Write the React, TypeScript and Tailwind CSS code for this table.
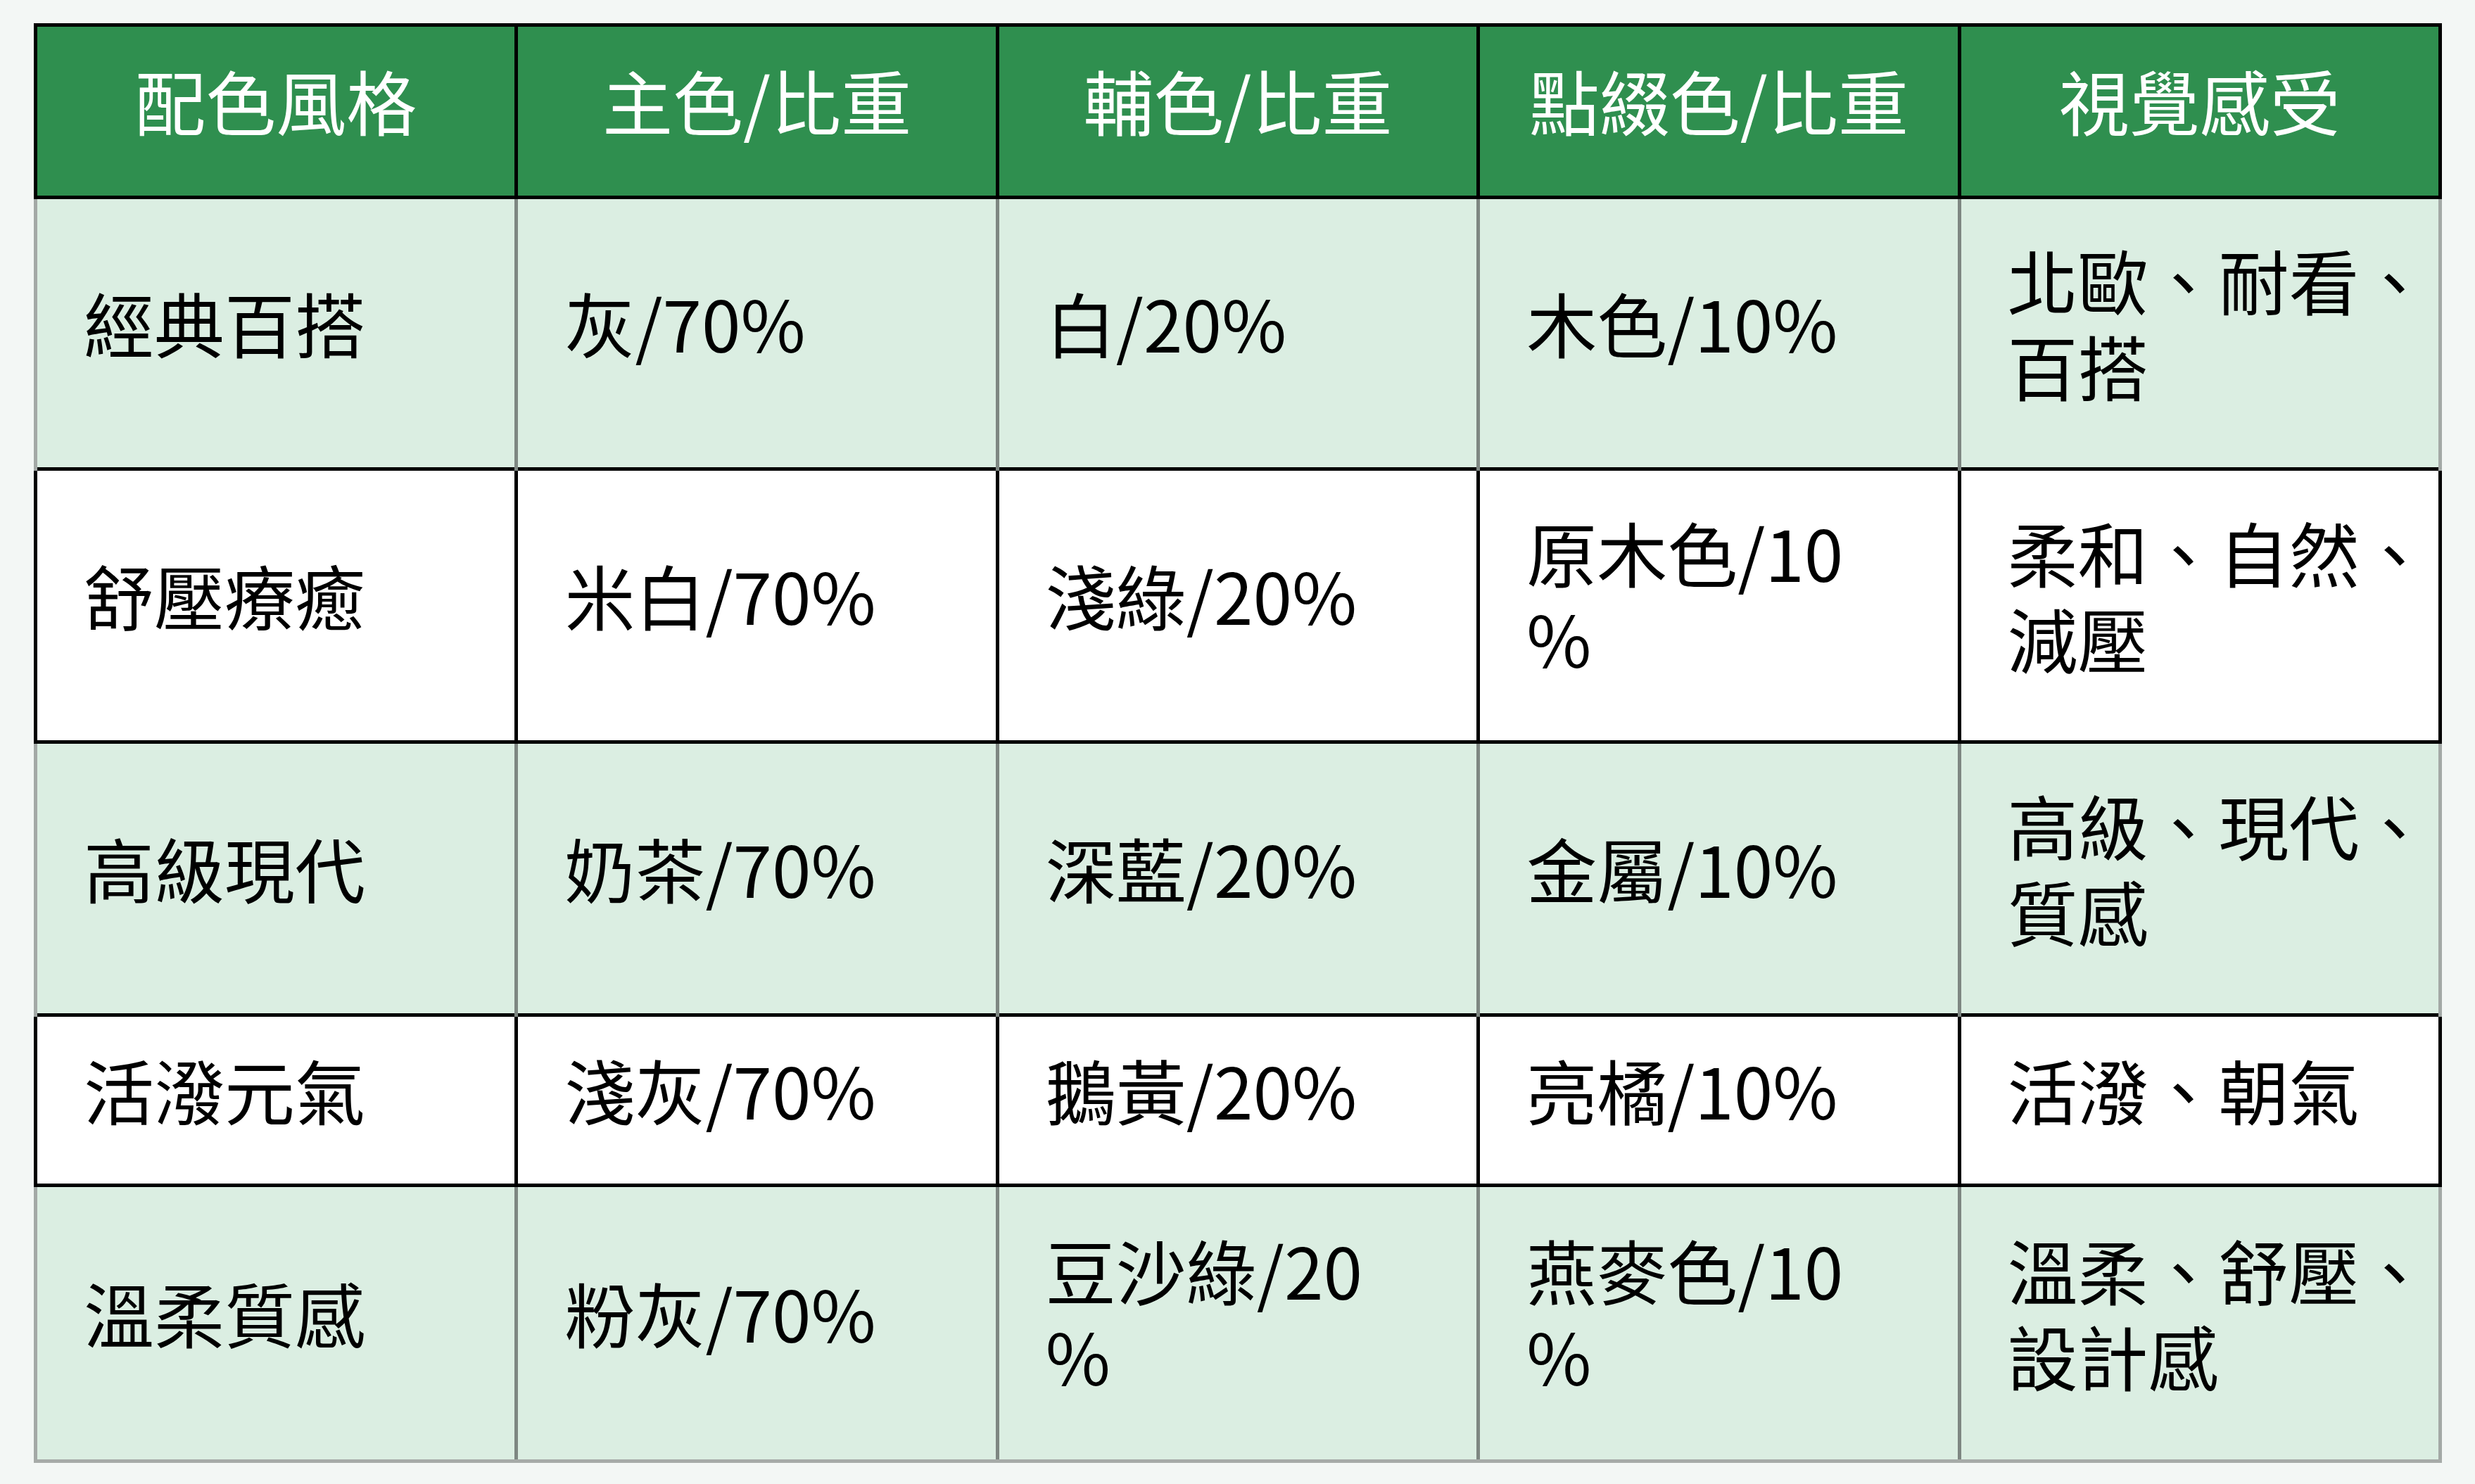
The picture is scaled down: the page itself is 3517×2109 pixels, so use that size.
import React from "react"

type Row = {
  cells: React.ReactNode[]
  tone: "green" | "white"
  h: string
}

const headers = ["配色風格", "主色/比重", "輔色/比重", "點綴色/比重", "視覺感受"]

const rows: Row[] = [
  {
    tone: "green",
    h: "h-[386px]",
    cells: ["經典百搭", "灰/70%", "白/20%", "木色/10%", <>北歐、耐看、<br />百搭</>],
  },
  {
    tone: "white",
    h: "h-[388px]",
    cells: ["舒壓療癒", "米白/70%", "淺綠/20%", <>原木色/10<br />%</>, <>柔和、自然、<br />減壓</>],
  },
  {
    tone: "green",
    h: "h-[388px]",
    cells: ["高級現代", "奶茶/70%", "深藍/20%", "金屬/10%", <>高級、現代、<br />質感</>],
  },
  {
    tone: "white",
    h: "h-[242px]",
    cells: ["活潑元氣", "淺灰/70%", "鵝黃/20%", "亮橘/10%", "活潑、朝氣"],
  },
  {
    tone: "green",
    h: "h-[392px]",
    cells: ["溫柔質感", "粉灰/70%", <>豆沙綠/20<br />%</>, <>燕麥色/10<br />%</>, <>溫柔、舒壓、<br />設計感</>],
  },
]

export default function App() {
  return (
    <div
      className="min-h-[2109px] w-full bg-[#f3f7f5] pl-[48px] pt-[33px]"
      style={{ fontFamily: '"Noto Sans CJK TC", "Noto Sans CJK SC", sans-serif' }}
    >
      <table className="w-[3422px] table-fixed border-collapse text-[100px] leading-[1.22]">
        <thead>
          <tr className="h-[245px]">
            {headers.map((h) => (
              <th
                key={h}
                className="border-[5px] border-black bg-[#2f8f4f] pb-[32px] text-center font-normal text-white"
              >
                {h}
              </th>
            ))}
          </tr>
        </thead>
        <tbody>
          {rows.map((row, i) => {
            const last = i === rows.length - 1
            return (
              <tr key={i} className={row.h}>
                {row.cells.map((c, j) => {
                  let cls = "pb-[32px] pl-[66px] pr-[10px] text-left align-middle text-black "
                  if (row.tone === "white") {
                    cls += "border-[5px] border-black bg-white"
                  } else {
                    cls += "border-x-[5px] border-[#7e8782] bg-[#dbeee2]"
                    if (j === 0) cls += " border-l-[#a3a9a6]"
                    if (j === row.cells.length - 1) cls += " border-r-[#a3a9a6]"
                    if (last) cls += " border-b-[5px] border-b-[#a6aba8]"
                  }
                  return (
                    <td key={j} className={cls}>
                      {c}
                    </td>
                  )
                })}
              </tr>
            )
          })}
        </tbody>
      </table>
    </div>
  )
}
